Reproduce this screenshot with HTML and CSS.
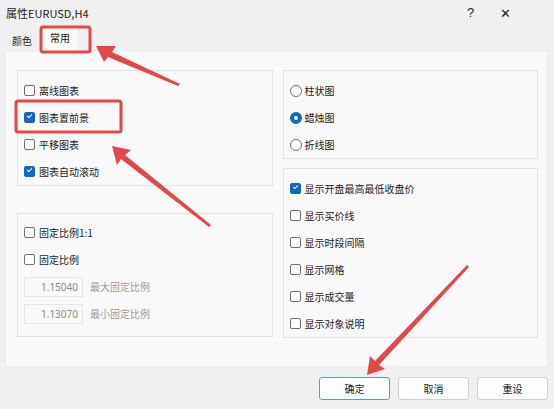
FILE: index.html
```html
<!DOCTYPE html>
<html>
<head>
  <meta charset="utf-8">
  <link rel="stylesheet" href="styles.css">
</head>
<body>
  <div class="window">
    <div class="titlebar">
      <span class="title">属性EURUSD,H4</span>
      <span class="title-btn help">?</span>
      <span class="title-btn close">✕</span>
    </div>

    <div class="tabs">
      <span class="tab">颜色</span>
      <span class="tab tab-active">常用</span>
    </div>

    <div class="panel">
      <div class="column">
        <div class="group group-chart">
          <label class="row"><span class="check"></span>离线图表</label>
          <label class="row"><span class="check checked"></span>图表置前景</label>
          <label class="row"><span class="check"></span>平移图表</label>
          <label class="row"><span class="check checked"></span>图表自动滚动</label>
        </div>
        <div class="group group-scale">
          <label class="row"><span class="check"></span>固定比例1:1</label>
          <label class="row"><span class="check"></span>固定比例</label>
          <div class="row">
            <span class="field">1.15040</span>
            <span class="field-label">最大固定比例</span>
          </div>
          <div class="row">
            <span class="field">1.13070</span>
            <span class="field-label">最小固定比例</span>
          </div>
        </div>
      </div>

      <div class="column">
        <div class="group group-type">
          <label class="row"><span class="radio"></span>柱状图</label>
          <label class="row"><span class="radio selected"></span>蜡烛图</label>
          <label class="row"><span class="radio"></span>折线图</label>
        </div>
        <div class="group group-show">
          <label class="row"><span class="check checked"></span>显示开盘最高最低收盘价</label>
          <label class="row"><span class="check"></span>显示买价线</label>
          <label class="row"><span class="check"></span>显示时段间隔</label>
          <label class="row"><span class="check"></span>显示网格</label>
          <label class="row"><span class="check"></span>显示成交量</label>
          <label class="row"><span class="check"></span>显示对象说明</label>
        </div>
      </div>
    </div>

    <div class="buttons">
      <button class="btn btn-default">确定</button>
      <button class="btn">取消</button>
      <button class="btn">重设</button>
    </div>
  </div>

  <!-- annotation marks drawn over the dialog -->
  <svg class="marks" width="554" height="409" viewBox="0 0 554 409">
    <rect x="41" y="27" width="49" height="25" rx="2" fill="none" stroke="#e2474a" stroke-width="3"/>
    <rect x="16" y="101" width="105" height="31" rx="2" fill="none" stroke="#e2474a" stroke-width="3"/>
    <polygon points="96,46 116,46 112,52 180,84 178,86 108,57 104,62" fill="#e2474a"/>
    <polygon points="112,146 131,150 125,155 211,225 209,227 121,159 117,165" fill="#e2474a"/>
    <polygon points="367,375 370,356 375,361 467,265 469,267 379,365 385,369" fill="#e2474a"/>
  </svg>
</body>
</html>
```

FILE: styles.css
```css
body {
  margin: 0;
  width: 554px;
  height: 409px;
  overflow: hidden;
  background: #f0f0f0;
  font-family: "Noto Sans CJK SC", "Noto Sans", sans-serif;
  font-size: 10px;
  color: #1b1b1b;
}

.window {
  display: flex;
  flex-direction: column;
  height: 409px;
}

.titlebar {
  display: flex;
  align-items: center;
  height: 25px;
  padding-left: 6px;
}

.title {
  flex: 1;
  font-size: 11px;
}

.title-btn {
  width: 35px;
  text-align: center;
  color: #222;
}

.help {
  font-family: "Liberation Sans", sans-serif;
  font-size: 13px;
}

.close {
  margin-right: 31px;
  font-size: 13px;
}

.tabs {
  display: flex;
  align-items: flex-end;
  height: 27px;
  padding-left: 5px;
}

.tab {
  padding: 0 7px 3px 7px;
  line-height: 16px;
}

.tab-active {
  background: #f9f9f9;
  height: 25px;
  padding: 3px 0 0 11px;
  width: 39px;
  box-sizing: border-box;
  line-height: 16px;
}

.panel {
  display: flex;
  gap: 10px;
  margin: 0 6px 0 5px;
  height: 315px;
  box-sizing: border-box;
  padding: 18px 9px 0 11px;
  background: #f9f9f9;
  border: 1px solid #ebebeb;
  border-top: none;
}

.column {
  display: flex;
  flex-direction: column;
  width: 256px;
}

.group {
  border: 1px solid #e3e3e3;
  box-sizing: border-box;
  padding: 6px 6px 0 6px;
}

.group-chart {
  height: 116px;
}

.group-scale {
  margin-top: 27px;
  height: 124px;
  padding-top: 5px;
}

.group-type {
  height: 89px;
}

.group-show {
  margin-top: 9px;
  height: 170px;
}

.row {
  display: flex;
  align-items: center;
  height: 27px;
  white-space: nowrap;
}

.check {
  width: 9px;
  height: 9px;
  border: 1px solid #707070;
  border-radius: 2px;
  margin-right: 4px;
  background: #fdfdfd;
  position: relative;
}

.check.checked {
  background: #0f68c4;
  border-color: #0f68c4;
}

.check.checked::after {
  content: "";
  position: absolute;
  left: 2px;
  top: 1px;
  width: 4px;
  height: 2px;
  border-left: 1px solid #fff;
  border-bottom: 1px solid #fff;
  transform: rotate(-45deg);
}

.radio {
  width: 10px;
  height: 10px;
  border: 1px solid #707070;
  border-radius: 50%;
  margin-right: 3px;
  background: #fdfdfd;
  box-sizing: content-box;
}

.radio.selected {
  width: 4px;
  height: 4px;
  background: #fff;
  border: 4px solid #0f68c4;
}

.field {
  width: 59px;
  height: 20px;
  box-sizing: border-box;
  border: 1px solid #e6e6e6;
  background: #f9f9f9;
  text-align: right;
  padding-right: 4px;
  line-height: 18px;
  color: #8a8a8a;
  font-family: "Noto Sans", sans-serif;
  font-size: 10px;
}

.field-label {
  margin-left: 7px;
  color: #9a9a9a;
}

.buttons {
  display: flex;
  justify-content: flex-end;
  gap: 8px;
  padding: 10px 6px 0 0;
}

.btn {
  width: 71px;
  height: 23px;
  border: 1px solid #d0d0d0;
  border-radius: 3px;
  background: #fdfdfd;
  font-family: "Noto Sans CJK SC", sans-serif;
  font-size: 10px;
  color: #1b1b1b;
  padding: 0;
}

.btn-default {
  border-color: #5c9ad6;
}

.marks {
  position: absolute;
  left: 0;
  top: 0;
  pointer-events: none;
}
```
